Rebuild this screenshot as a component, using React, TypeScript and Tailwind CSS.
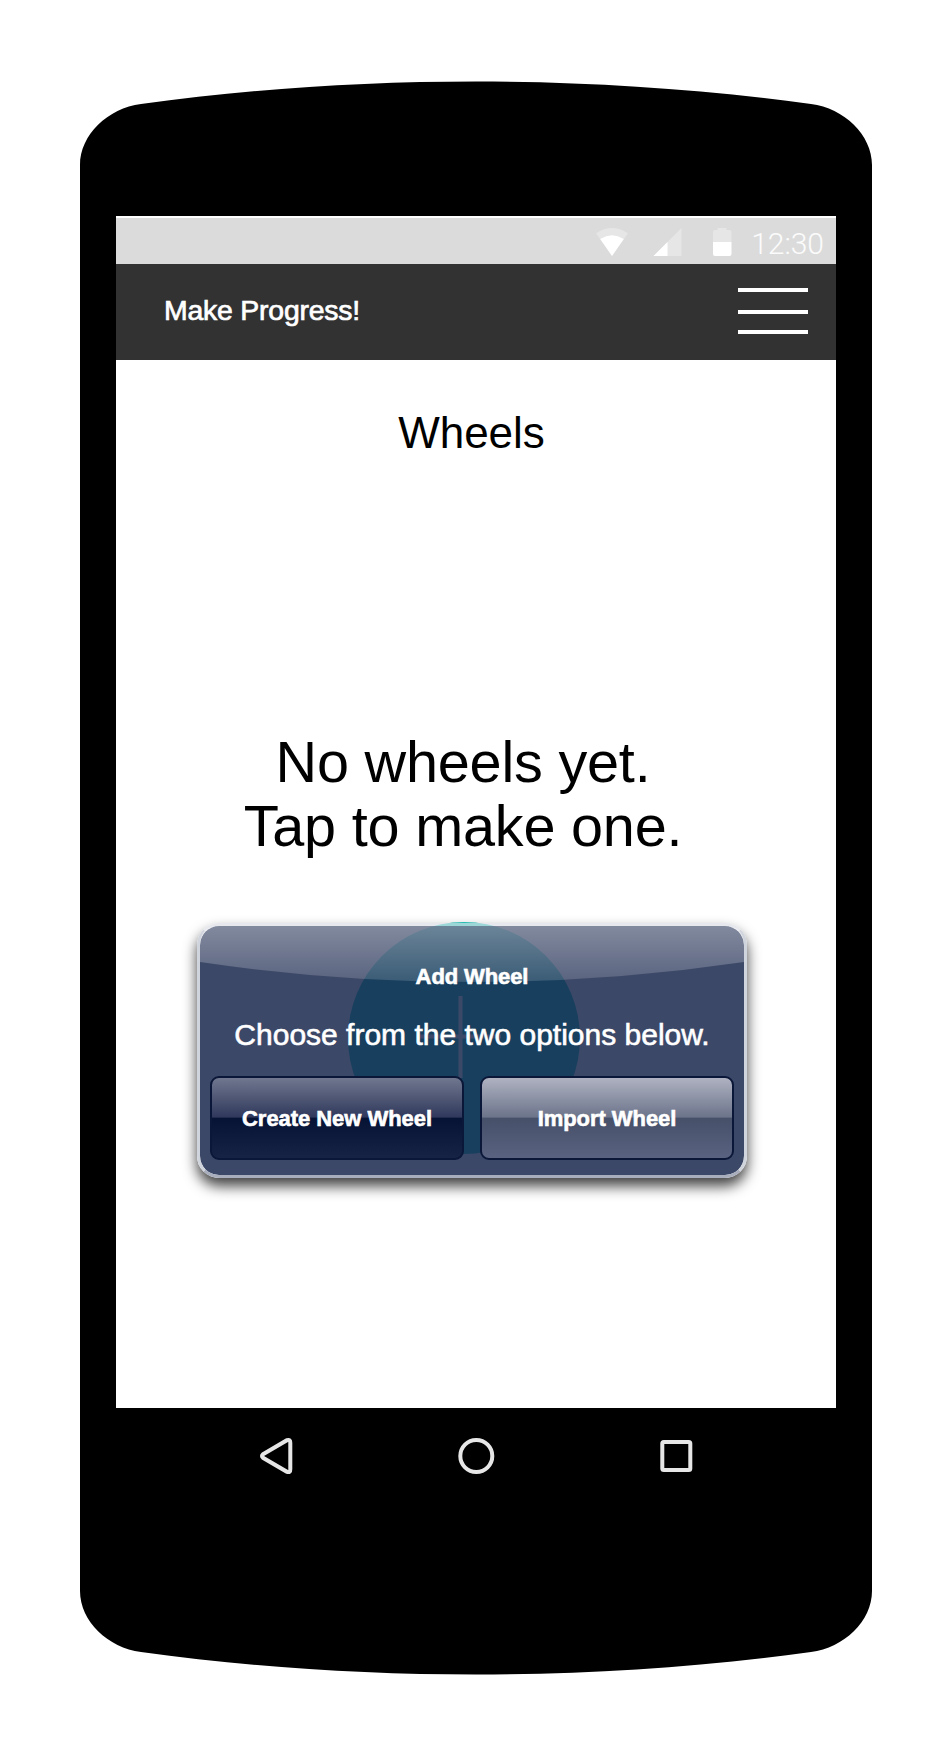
function Cap({ flip = false }: { flip?: boolean }) {
  return (
    <svg viewBox="0 0 792 84" className={flip ? "block h-[84px] w-[792px] -scale-y-100" : "block h-[84px] w-[792px]"}>
      <path d="M0 84C0 54 28 27 61 23C280 -7 512 -7 731 23C764 27 792 54 792 84Z" fill="#000" />
    </svg>
  );
}

function StatusBar() {
  return (
    <div className="flex h-[46px] items-center justify-end bg-[#dbdbdb] pr-3">
      <svg viewBox="0 0 136 28" className="mr-[19px] mt-[2px] h-7 w-[136px]">
        <path d="M0 5.2Q16 -5.2 32 5.2L16 28Z" fill="#e6e6e6" />
        <path d="M4.2 11Q16 3.6 27.8 11L16 28Z" fill="#fff" />
        <path d="M57.5 28L85.5 0V28Z" fill="#e6e6e6" />
        <path d="M57.5 28L71.5 14V28Z" fill="#fff" />
        <path d="M121.500 0h9v2h3q2 0 2 2v10h-18.500V4q0-2 2-2h2.500Z" fill="#e6e6e6" />
        <path d="M117 14h18.500v12q0 2-2 2H119q-2 0-2-2Z" fill="#fff" />
      </svg>
      <span className="mt-[6px] font-[Roboto] text-[30px] font-light leading-none text-white/90">12:30</span>
    </div>
  );
}

function AppBar() {
  return (
    <header className="flex h-24 items-start justify-between bg-[#323232] pl-12 pr-7">
      <h1 className="mt-[30px] text-[28.400px] leading-8 tracking-[-0.2px] text-white [-webkit-text-stroke:0.7px_white]">Make Progress!</h1>
      <div className="mt-6 w-[70px]">
        <div className="h-1 bg-white" />
        <div className="mt-[18px] h-1 bg-white" />
        <div className="mt-4 h-1 bg-white" />
      </div>
    </header>
  );
}

function AddDialog() {
  return (
    <div className="absolute -left-[151px] top-[1px] h-[255px] w-[550px] rounded-[22px] border-[3px] border-x-[#d0d4dc] border-b-[#a9aebd] border-t-[#d9dce3]/65 bg-[#142349]/83 bg-clip-padding shadow-[0_8px_14px_rgba(0,0,0,0.75)]">
      <svg viewBox="0 0 544 249" className="absolute inset-0 h-full w-full">
        <defs>
          <linearGradient id="gloss" x1="0" y1="0" x2="0" y2="1">
            <stop offset="0" stopColor="#fff" stopOpacity=".36" />
            <stop offset="1" stopColor="#fff" stopOpacity=".15" />
          </linearGradient>
        </defs>
        <path d="M0 19Q0 0 19 0H525Q544 0 544 19V36Q272 76 0 36Z" fill="url(#gloss)" />
      </svg>
      <div className="relative flex h-full flex-col items-center text-white">
        <h3 className="mt-[37px] text-[22px] font-bold leading-7 tracking-[-0.1px] [-webkit-text-stroke:0.6px_white]">Add Wheel</h3>
        <p className="mt-[26px] whitespace-nowrap text-[30px] leading-9 [-webkit-text-stroke:0.6px_white]">Choose from the two options below.</p>
        <div className="mt-[23px] flex gap-4">
          <button className="h-[84px] w-[254px] rounded-[9px] border-2 border-[#0b1738] bg-[linear-gradient(#70778f_0%,#30395c_49%,#061335_50%,#172344_100%)] text-[22px] font-bold tracking-[-0.05px] [-webkit-text-stroke:0.6px_white]">Create New Wheel</button>
          <button className="h-[84px] w-[254px] rounded-[9px] border-2 border-[#0b1738] bg-[linear-gradient(#afb2c1_0%,#6c748b_49%,#465069_50%,#596280_100%)] text-[22px] font-bold tracking-[-0.05px] [-webkit-text-stroke:0.6px_white]">Import Wheel</button>
        </div>
      </div>
    </div>
  );
}

export default function App() {
  return (
    <main className="flex h-[1756px] w-[952px] flex-col items-center bg-white pt-[81px] font-['Liberation_Sans',sans-serif]">
      <Cap />
      <div className="w-[792px] bg-black px-9 pt-[51px]">
        <div className="flex h-[1192px] flex-col bg-white pt-[2px]">
          <StatusBar />
          <AppBar />
          <h2 className="mt-[46px] pr-[9px] text-center text-[44px] leading-[54px] text-black">Wheels</h2>
          <p className="mt-[270px] pr-[26px] text-center text-[57.600px] leading-[64px] tracking-[-0.2px] text-black">
            No wheels yet.
            <br />
            Tap to make one.
          </p>
          <div className="relative ml-[232px] mt-[64px] h-[232px] w-[232px]">
            <svg viewBox="0 0 232 232" className="block h-full w-full">
              <circle cx="116" cy="116" r="116" fill="#2bcbc0" />
              <path d="M112.500 74V156M72 114.500H153" stroke="#fff" strokeWidth="4" />
            </svg>
            <AddDialog />
          </div>
        </div>
        <nav className="flex h-[96px] items-center justify-between pl-[143px] pr-[143px]">
          <svg viewBox="0 0 34 38" className="h-[38px] w-[34px]">
            <path d="M4 17.200L28 3.200Q31.500 2 31.300 6V32Q31.500 36 28 34.800L4 20.800Q2 19 4 17.200Z" fill="none" stroke="#e6e6e6" strokeWidth="4" />
          </svg>
          <svg viewBox="0 0 38 38" className="h-[38px] w-[38px]">
            <circle cx="19.300" cy="19" r="16" fill="none" stroke="#e6e6e6" strokeWidth="4" />
          </svg>
          <svg viewBox="0 0 34 34" className="h-[34px] w-[34px]">
            <rect x="3.300" y="3" width="28" height="28" rx="1.500" fill="none" stroke="#e6e6e6" strokeWidth="4" />
          </svg>
        </nav>
        <div className="h-[87px]" />
      </div>
      <Cap flip />
    </main>
  );
}
